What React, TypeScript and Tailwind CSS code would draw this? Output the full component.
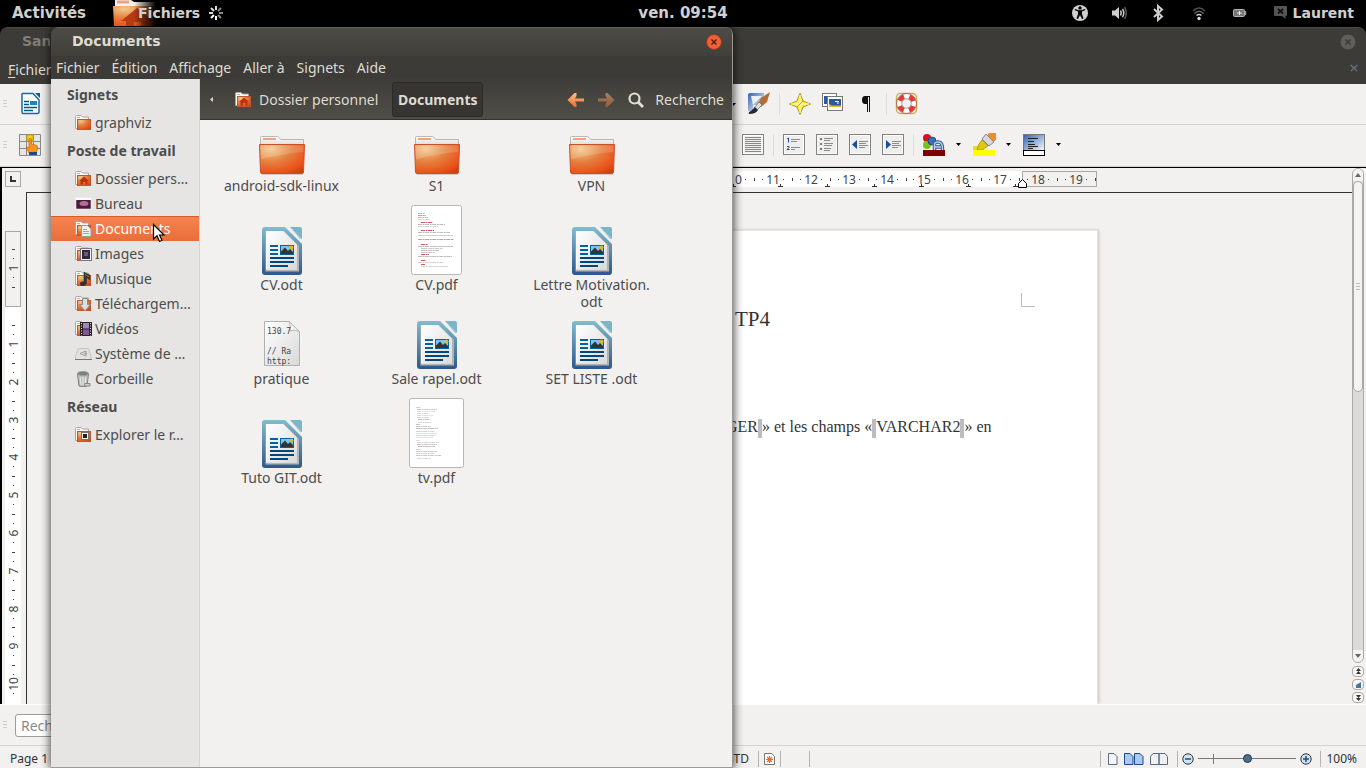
import React from "react";
import type { ReactNode } from "react";

type Kids = { children?: ReactNode };

/* ---------- shared gradients ---------- */

function Gradients() {
  return (
    <svg className="absolute h-0 w-0" aria-hidden="true">
      <defs>
        <radialGradient id="folder" cx="0.25" cy="0.15" r="1">
          <stop offset="0" stopColor="#f3c88c" />
          <stop offset="0.45" stopColor="#e5803f" />
          <stop offset="0.85" stopColor="#ea501a" />
          <stop offset="1" stopColor="#cf4313" />
        </radialGradient>
        <linearGradient id="tab" x1="0" y1="0" x2="0" y2="1">
          <stop offset="0" stopColor="#ffffff" />
          <stop offset="1" stopColor="#dcdcdc" />
        </linearGradient>
        <linearGradient id="odt" x1="0" y1="0" x2="0" y2="1">
          <stop offset="0" stopColor="#82bccd" />
          <stop offset="1" stopColor="#2d578c" />
        </linearGradient>
        <linearGradient id="paper" x1="0" y1="0" x2="1" y2="1">
          <stop offset="0" stopColor="#ffffff" />
          <stop offset="1" stopColor="#d9d9d9" />
        </linearGradient>
        <linearGradient id="blue" x1="0" y1="0" x2="1" y2="1">
          <stop offset="0" stopColor="#2f63ad" />
          <stop offset="1" stopColor="#ffffff" />
        </linearGradient>
        <linearGradient id="arrow" x1="0" y1="0" x2="0" y2="1">
          <stop offset="0" stopColor="#fbc08a" />
          <stop offset="1" stopColor="#ec6a2c" />
        </linearGradient>
      </defs>
    </svg>
  );
}

/* ---------- file icons ---------- */

function FolderIcon() {
  return (
    <svg width="48" height="48" viewBox="0 0 48 48" aria-hidden="true">
      <path d="M2.500 17V9.500Q2.500 8.500 3.500 8.500H19.500L23 11.500H45.500V17Z" fill="url(#tab)" stroke="#b9b7b4" />
      <rect x="5" y="10" width="13" height="2" fill="#f0a47c" />
      <path d="M1.500 16.500H46.500L45.500 44Q45.500 45.500 44 45.500H4Q2.500 45.500 2.500 44Z" fill="url(#folder)" stroke="#c8512a" />
      <path d="M2.500 17.500H45.500V24Q24 25.500 3 31.500Z" fill="#fff" opacity="0.16" />
      <path d="M4 46.500H45" stroke="#000" opacity="0.15" />
    </svg>
  );
}

function OdtIcon() {
  return (
    <svg width="40" height="48" viewBox="0 0 40 48" aria-hidden="true">
      <path d="M3 0H23L40 17V45Q40 48 37 48H3Q0 48 0 45V3Q0 0 3 0Z" fill="url(#odt)" />
      <path d="M28 0H38Q40 0 40 2V12Z" fill="#7ab6c8" />
      <path d="M28 0L40 12L38 12Z" fill="#5b9cb9" opacity="0.5" />
      <path d="M3.500 4H22L37 19V44.500H3.500Z" fill="#b3b3b3" />
      <path d="M4 4H21L35 18V42.500H4Z" fill="#fbfbfb" />
      <path d="M5 4H21L35 18V42.500H5Z" fill="url(#paper)" />
      <g fill="#00639c">
        <rect x="8" y="18" width="8" height="2" />
        <rect x="8" y="22" width="8" height="2" />
        <rect x="8" y="26" width="8" height="2" />
        <rect x="8" y="30" width="24" height="2" fill="#00487a" />
        <rect x="8" y="34" width="24" height="2" fill="#00487a" />
        <rect x="8" y="38" width="18" height="2" fill="#00487a" />
        <rect x="18" y="18" width="14" height="10" />
      </g>
      <rect x="19" y="19" width="12" height="8" fill="#7cc4ee" />
      <circle cx="29.500" cy="20.500" r="2" fill="#d9bb2c" />
      <path d="M19 27V24.500L23 20.500L26 24L28 22L31 25V27Z" fill="#333" />
    </svg>
  );
}

function TextFileIcon() {
  return (
    <svg width="40" height="48" viewBox="0 0 40 48" aria-hidden="true">
      <path d="M2.500 0.500H27L37.500 10.500V44.500H2.500Z" fill="url(#paper)" stroke="#b0b0ae" />
      <path d="M27 0.500L37.500 10.500Q32 8 28 10Q29 5 27 0.500Z" fill="#f4f4f4" stroke="#b8b8b6" />
      <g fill="#444" fontFamily="'DejaVu Sans Mono', monospace" fontSize="8">
        <text x="5" y="13">130.7</text>
        <text x="5" y="33">// Ra</text>
        <text x="5" y="43">http:</text>
      </g>
    </svg>
  );
}

const cvLines: [number, number, number, string][] = [
  [7, 8, 7, "#999"], [7, 10, 8, "#777"], [7, 12, 10, "#999"], [7, 14, 12, "#bbb"],
  [10, 17, 12, "#b33"], [7, 19, 27, "#999"], [7, 21, 20, "#bbb"],
  [10, 25, 13, "#b33"], [7, 27, 32, "#999"], [7, 30, 35, "#aaa"], [7, 34, 36, "#777"],
  [10, 39, 7, "#b33"], [7, 41, 35, "#999"], [10, 43, 22, "#aaa"], [10, 45, 18, "#999"], [10, 47, 14, "#aaa"],
  [10, 49, 8, "#b33"], [7, 51, 34, "#999"], [10, 55, 5, "#b33"], [7, 57, 26, "#bbb"], [10, 59, 4, "#b33"], [10, 61, 27, "#bbb"],
];

const tvLines: [number, number, number, string][] = [
  [7, 9, 5, "#bbb"], [8, 11, 20, "#aaa"], [8, 13, 18, "#ccc"], [8, 15, 12, "#bcd"], [8, 17, 16, "#ccc"],
  [8, 19, 12, "#bbb"], [9, 21, 12, "#999"], [9, 24, 13, "#bbb"], [7, 26, 5, "#aaa"], [7, 28, 15, "#aaa"], [7, 30, 22, "#999"],
  [7, 33, 19, "#bbb"], [7, 35, 21, "#bcd"], [7, 37, 20, "#bbb"], [7, 39, 17, "#ccc"], [7, 42, 4, "#ccc"],
  [8, 44, 22, "#bbb"], [8, 46, 20, "#aaa"], [9, 48, 17, "#999"], [7, 51, 5, "#bbb"], [7, 53, 21, "#aaa"],
  [7, 55, 19, "#bbb"], [7, 57, 25, "#aaa"], [8, 60, 14, "#bbb"],
];

function PageThumb({ width, lines }: { width: number; lines: [number, number, number, string][] }) {
  return (
    <svg width={width} height="70" viewBox={`0 0 ${width} 70`} aria-hidden="true">
      <rect x="0.5" y="0.5" width={width - 1} height="69" rx="2" fill="#fff" stroke="#b8b7b4" />
      {lines.map(([x, y, w, c], i) => (
        <path key={i} d={`M${x} ${y}.5H${x + w}`} stroke={c} strokeWidth={c === "#b33" ? 1 : 0.8} opacity="0.8" strokeDasharray="4 0.6 2 0.5" />
      ))}
    </svg>
  );
}

/* ---------- sidebar icons ---------- */

function SmallFolder({ children }: Kids) {
  return (
    <svg className="shrink-0" width="17" height="16" viewBox="0 0 17 16" aria-hidden="true">
      <path d="M0.500 13.500V1.500Q0.500 0.500 1.500 0.500H6L7.500 2H13.500V13.500Z" fill="#fbfbfa" stroke="#a8a5a2" />
      <path d="M2 2.500H5" stroke="#f0a47c" />
      <rect x="2.500" y="4.500" width="13" height="10" fill="url(#folder)" stroke="#c4552c" />
      {children}
    </svg>
  );
}

const smallIcons: Record<string, ReactNode> = {
  folder: <SmallFolder />,
  home: (
    <SmallFolder>
      <path d="M9 5.500L14 10H12.500V13.500H10.500V11H8V13.500H5.500V10H4Z" fill="#b93414" />
    </SmallFolder>
  ),
  desktop: (
    <svg className="shrink-0" width="17" height="16" viewBox="0 0 17 16" aria-hidden="true">
      <rect x="1" y="2" width="15" height="11" fill="#4d1a3b" stroke="#fff" strokeWidth="0.500" />
      <rect x="1" y="2" width="15" height="2" fill="#fff" />
      <ellipse cx="9" cy="7.500" rx="4.500" ry="2.500" fill="#c987a9" opacity="0.800" />
    </svg>
  ),
  documents: (
    <SmallFolder>
      <path d="M6.500 4.500H12.500L16 8V15.500H6.500Z" fill="#efefee" stroke="#9b9b98" />
      <path d="M8 8.500H12M8 10.500H14M8 12.500H14" stroke="#a9a9a6" />
    </SmallFolder>
  ),
  images: (
    <SmallFolder>
      <rect x="5.500" y="2.500" width="11" height="12" fill="#eee" stroke="#777" />
      <rect x="7" y="4" width="8" height="9" fill="#342a40" />
      <rect x="9" y="6" width="4" height="4" fill="#6b587c" />
    </SmallFolder>
  ),
  music: (
    <SmallFolder>
      <path d="M9.500 12V2L14.500 4.500V8L11 5.500V13" stroke="#333" strokeWidth="1.600" fill="none" />
      <ellipse cx="8" cy="12.800" rx="3" ry="2.300" fill="#333" />
    </SmallFolder>
  ),
  downloads: (
    <SmallFolder>
      <path d="M7.500 2.500H12.500V8.500H15.500L10 15L4.500 8.500H7.500Z" fill="#ddd" stroke="#888" />
    </SmallFolder>
  ),
  videos: (
    <SmallFolder>
      <rect x="5" y="1" width="12" height="14" fill="#29242b" />
      <rect x="8" y="2" width="6" height="5.500" fill="#a383b1" />
      <rect x="8" y="8.500" width="6" height="5.500" fill="#84559b" />
      <path d="M6.500 2V15M15.500 2V15" stroke="#ddd" strokeDasharray="1 1.500" />
    </SmallFolder>
  ),
  drive: (
    <svg className="shrink-0" width="17" height="16" viewBox="0 0 17 16" aria-hidden="true">
      <path d="M3.500 2.500H13.500L16 10.500V13.500H0.500V10.500Z" fill="#e2e2e1" stroke="#c4c4c2" />
      <path d="M0 13.500H17" stroke="#777" />
      <path d="M5 7.500L11 5V10ZM9 7.500H12" fill="none" stroke="#9a9a98" />
    </svg>
  ),
  trash: (
    <svg className="shrink-0" width="17" height="16" viewBox="0 0 17 16" aria-hidden="true">
      <path d="M2.500 3L4 15Q8 16.500 12 15L13.500 3Z" fill="#bdbfbe" stroke="#7e807f" />
      <ellipse cx="8" cy="2.500" rx="5.500" ry="2" fill="#7c7e7d" stroke="#9b9d9c" />
      <path d="M5 6L6 14M8 6V14M11 6L10 14" stroke="#e9e9e9" />
      <path d="M9.500 12.500H15V15H10Z" fill="#d0d0d0" stroke="#888" />
    </svg>
  ),
  network: (
    <SmallFolder>
      <rect x="6.500" y="5.500" width="7" height="7" fill="#f4f0ee" stroke="#777" />
      <rect x="8" y="7" width="4" height="4" fill="#222" />
    </SmallFolder>
  ),
};

/* ---------- top bar ---------- */

function TopBar() {
  return (
    <header className="flex h-[27px] shrink-0 items-center bg-black font-['DejaVu_Sans',sans-serif] text-[15px] font-bold text-[#d0d0d0]">
      <div className="flex flex-1 items-center">
        <button className="ml-3">Activités</button>
        <button className="relative ml-[27px] flex h-[27px] items-center pb-[2px] pl-[25px]">
          <svg className="absolute left-0 top-0" width="46" height="27" viewBox="0 0 46 27" aria-hidden="true">
            <defs>
              <linearGradient id="fade" x1="0" x2="1">
                <stop offset="0.45" stopColor="#000" stopOpacity="0" />
                <stop offset="0.93" stopColor="#000" />
              </linearGradient>
            </defs>
            <path d="M2 7V0H18L21 2H46V7Z" fill="#f2f2f2" />
            <path d="M4 2H16" stroke="#f0a47c" strokeWidth="3" />
            <path d="M0 6H46V26H1Z" fill="url(#folder)" />
            <path d="M8 21L24 8L40 21H36V26H28V22H21V26H13V21Z" fill="#b93a12" />
            <rect width="46" height="27" fill="url(#fade)" />
          </svg>
          <span className="relative text-sm">Fichiers</span>
          <svg className="ml-2" width="18" height="16" viewBox="-8 -8 18 16" strokeWidth="2" aria-hidden="true">
            <g stroke="#ddd">
              <path d="M0 -3V-7M-2 -2L-5 -5M-3 0H-7" />
              <path d="M-2 2L-5 5M0 3V7" stroke="#fff" />
              <path d="M2 -2L5 -5M3 0H7M2 2L5 5" stroke="#888" />
            </g>
          </svg>
        </button>
      </div>
      <time className="pb-px">ven. 09:54</time>
      <div className="flex flex-1 items-center justify-end pb-[2px] text-sm">
        <svg className="mr-[22px]" width="18" height="18" viewBox="0 0 18 18" aria-label="Accessibilité">
          <circle cx="9" cy="9" r="8" fill="#d0d0d0" />
          <circle cx="9" cy="4" r="1.700" fill="#000" />
          <path d="M3.500 6L7 7.500V10L5.500 14.500L7 15L9 11L11 15L12.500 14.500L11 10V7.500L14.500 6L14 5L10 6.300H8L4 5Z" fill="#000" />
        </svg>
        <svg className="mr-[24px]" width="17" height="16" viewBox="0 0 17 16" aria-label="Volume">
          <path d="M1 5.500H4L8 2V14L4 10.500H1Z" fill="#d0d0d0" />
          <path d="M9.500 5.500Q11 8 9.500 10.500M11.500 4Q14 8 11.500 12" stroke="#ccc" strokeWidth="1.500" fill="none" />
          <path d="M13.500 2Q17 8 13.500 14" stroke="#555" strokeWidth="1.500" fill="none" />
        </svg>
        <svg className="mr-[27px]" width="12" height="18" viewBox="0 0 12 18" aria-label="Bluetooth">
          <path d="M2 5L10 12.500L6 16V2L10 5.500L2 13" stroke="#ccc" strokeWidth="2" fill="none" />
        </svg>
        <svg className="mr-[26px]" width="16" height="16" viewBox="0 0 16 16" aria-label="Wi-Fi">
          <g fill="none" strokeWidth="1.600">
            <path d="M2 6Q8 0 14 6" stroke="#4d4d4d" />
            <path d="M3.500 8.500Q8 4 12.500 8.500" stroke="#666" />
            <path d="M5.500 10.500Q8 8.500 10.500 10.500" stroke="#ccc" />
          </g>
          <circle cx="8" cy="13.500" r="1.700" fill="#ddd" />
        </svg>
        <svg className="mr-[26px]" width="14" height="8" viewBox="0 0 14 8" aria-label="Batterie">
          <rect x="0.500" y="0.500" width="11" height="7" rx="1" fill="#777" stroke="#b5b5b5" />
          <path d="M4 4H9M6.500 2V6" stroke="#eee" />
          <path d="M12.500 2V6" stroke="#999" strokeWidth="1.500" />
        </svg>
        <button className="mr-3 flex items-center gap-[5px]">
          <svg width="15" height="15" viewBox="0 0 15 15" aria-hidden="true">
            <path d="M2 1H13Q14 1 14 2V10Q14 11 13 11H12.500V14L9 11H2Q1 11 1 10V2Q1 1 2 1Z" fill="#555" />
            <path d="M5 4L10 8.500M10 4L5 8.500" stroke="#111" strokeWidth="1.800" />
          </svg>
          Laurent
        </button>
      </div>
    </header>
  );
}

/* ---------- word processor ---------- */

function Cell({ label, children }: Kids & { label: string }) {
  return (
    <button aria-label={label} className="flex h-8 w-[33px] shrink-0 items-center justify-center">
      <svg width="24" height="24" viewBox="0 0 24 24" aria-hidden="true">
        {children}
      </svg>
    </button>
  );
}

function Caret({ label }: { label: string }) {
  return (
    <button aria-label={label} className="flex h-8 w-[17px] shrink-0 items-center justify-center">
      <svg width="5" height="3" viewBox="0 0 5 3" aria-hidden="true">
        <path d="M0 0H5L2.500 3Z" fill="#000" />
      </svg>
    </button>
  );
}

function Separator() {
  return (
    <span className="flex w-2 shrink-0 justify-center">
      <span className="h-[22px] w-px bg-[#dcdbd9]" />
    </span>
  );
}

function Handle() {
  return (
    <svg className="ml-[3px] mr-[6px] shrink-0" width="4" height="8" viewBox="0 0 4 8" aria-hidden="true">
      <path d="M0 0.500H4M0 3.500H4M0 6.500H4" stroke="#cfcecb" />
    </svg>
  );
}

function Frame({ children }: Kids) {
  return (
    <>
      <rect x="1.500" y="1.500" width="21" height="20" fill="#eeefed" stroke="#7f827d" />
      <rect x="2.500" y="2.500" width="19" height="18" fill="none" stroke="#fff" />
      {children}
    </>
  );
}

function Toolbars() {
  return (
    <>
      <div className="flex h-[41px] shrink-0 items-center overflow-hidden border-b border-[#d5d4d1]">
        <Handle />
        <Cell label="Nouveau">
          <path d="M4.500 1.500H15L21 8V20Q21 21.500 19.500 21.500H5Q4 21.500 4 20V2Z" fill="#fff" stroke="#1a6a96" strokeWidth="1.500" />
          <path d="M17 1H22V6Z" fill="#0f5f90" />
          <path d="M6 9.500H11M6 12.500H11M6 15.500H19M6 18.500H15" stroke="#00557f" strokeWidth="1.400" />
          <rect x="12" y="9" width="7" height="4" fill="#2a7fb5" />
        </Cell>
        <div className="w-[679px] shrink-0" />
        <Caret label="Options de collage" />
        <Cell label="Copier le formatage">
          <path d="M1 3Q1 1 3 1H17V13H6V19H1Z" fill="url(#blue)" />
          <path d="M4 4H15L6 13Z" fill="#fff" opacity="0.850" />
          <path d="M23 0L14 6L11 12L14 15L20 10Z" fill="#b56d36" />
          <path d="M12 10L15 13L10 18L7 16Z" fill="#ddd" stroke="#666" strokeWidth="0.700" />
          <path d="M8 15L11 18Q9 22 2 22Q1 20 4 19Q6 17 8 15Z" fill="#222b35" />
        </Cell>
        <Separator />
        <Cell label="Navigateur">
          <path d="M12 1L15 9L22.500 12L15 15L12 22.500L9 15L1.500 12L9 9Z" fill="#f8ed45" stroke="#b59d10" />
          <path d="M12 3V21M3 12H21" stroke="#fffbd0" />
          <path d="M12 12L15 9M12 12L9 15" stroke="#c5ad10" />
        </Cell>
        <Cell label="Galerie">
          <rect x="1.500" y="1.500" width="14" height="13" fill="#fff" stroke="#777" />
          <rect x="3" y="4" width="11" height="8" fill="#2c589c" />
          <rect x="6.500" y="4.500" width="15" height="14" fill="#fff" stroke="#777" />
          <rect x="8" y="7" width="12" height="8" fill="#2c589c" />
          <path d="M8 15V12L11 13.500H20V15Z" fill="#e7b52f" />
          <path d="M14 9.500H18M16 11H18" stroke="#fff" />
        </Cell>
        <Cell label="Caractères non imprimables">
          <path d="M9 4H16V20H15V5H14V20H13V12H11Q8 12 8 8Q8 4 11 4Z" fill="#111" />
        </Cell>
        <Separator />
        <Cell label="Aide">
          <rect x="1.500" y="1.500" width="20" height="20" rx="4" fill="none" stroke="#c8b15c" strokeWidth="1.500" />
          <circle cx="11.500" cy="11.500" r="7.300" fill="none" stroke="#fff" strokeWidth="5" />
          <circle cx="11.500" cy="11.500" r="7.300" fill="none" stroke="#e23b34" strokeWidth="5" strokeDasharray="6 5.467" strokeDashoffset="-2.700" />
          <circle cx="11.500" cy="11.500" r="4.700" fill="#f2f1f0" stroke="#888" strokeWidth="0.800" />
          <circle cx="11.500" cy="11.500" r="10" fill="none" stroke="#a33" strokeWidth="0.700" />
        </Cell>
      </div>
      <div className="flex h-[42px] shrink-0 items-center overflow-hidden border-b border-[#cfcecb] pb-[2px]">
        <Handle />
        <Cell label="Styles et formatage">
          <path d="M1.500 1.500H22.500V22.500H1.500ZM8.500 1.500V22.500M15.500 1.500V22.500M1.500 8.500H22.500M1.500 15.500H22.500" fill="#e6e7e4" stroke="#888a85" />
          <rect x="9" y="2" width="6" height="6" fill="#f5d80c" stroke="#c4a000" />
          <path d="M11 6Q12.500 4 13.500 6V11L19 12.500Q20 13 19.500 16L18 20H11L8 14L11 14.500Z" fill="#f8931e" stroke="#c9660b" strokeWidth="0.700" />
          <rect x="11" y="19" width="8" height="3" fill="#204a87" />
        </Cell>
        <div className="w-[690px] shrink-0" />
        <Cell label="Justifié">
          <Frame>
            <path d="M4 4.500H20M4 6.500H20M4 8.500H20M4 10.500H20M4 12.500H20M4 14.500H20M4 16.500H20M4 18.500H20" stroke="#888a85" />
          </Frame>
        </Cell>
        <Separator />
        <Cell label="Numérotation">
          <Frame>
            <path d="M9 6.500H18M9 8.500H15M9 14.500H18M9 16.500H13" stroke="#8b8d88" />
            <path d="M5 6L6.500 5V9.500M5 13.500H7V14.500L5 16.500H7.500" stroke="#204a87" fill="none" />
          </Frame>
        </Cell>
        <Cell label="Puces">
          <Frame>
            <path d="M9 5.500H18M9 7.500H15M9 10.500H18M9 12.500H17M9 15.500H16M9 17.500H15" stroke="#8b8d88" />
            <path d="M5 6H7M5 11H7M5 16H7" stroke="#777" strokeWidth="2" />
          </Frame>
        </Cell>
        <Cell label="Diminuer le retrait">
          <Frame>
            <path d="M9 7V16L4 11.500Z" fill="#204a9a" />
            <path d="M11 8.500H20M11 10.500H18M11 12.500H20M11 14.500H17" stroke="#8b8d88" />
          </Frame>
        </Cell>
        <Cell label="Augmenter le retrait">
          <Frame>
            <path d="M5 7V16L10 11.500Z" fill="#204a9a" />
            <path d="M11 8.500H20M11 10.500H18M11 12.500H20M11 14.500H17" stroke="#8b8d88" />
          </Frame>
        </Cell>
        <Separator />
        <Cell label="Couleur de police">
          <circle cx="5" cy="5" r="4" fill="#d8101e" />
          <circle cx="5" cy="12" r="4" fill="#73c616" />
          <circle cx="10" cy="8" r="4" fill="#3b70b5" stroke="#1e4a86" />
          <path d="M12.500 17V12Q12 9 16 9Q21 9 20.500 17M13 14H19" fill="none" stroke="#2d5a96" strokeWidth="3.500" />
          <path d="M12.500 17V12Q12 9 16 9Q21 9 20.500 17M13 14H19" fill="none" stroke="#b9d0ea" strokeWidth="1.500" />
          <rect x="1" y="17" width="22" height="6" fill="#800000" />
        </Cell>
        <Caret label="Choisir la couleur de police" />
        <Cell label="Surlignage">
          <rect x="1" y="13" width="11" height="5" fill="#e8dc20" />
          <path d="M17 0H24V7L20 10L14 4Z" fill="#f58a2a" />
          <path d="M14 1L22 9L17 13L10 6Z" fill="#d7d7d7" stroke="#888" />
          <path d="M10 7L16 13L10 17H5Q6 11 10 7Z" fill="#e2c90e" stroke="#a28b00" strokeWidth="0.700" />
          <rect x="1" y="17" width="22" height="6" fill="#ffff00" />
        </Cell>
        <Caret label="Choisir le surlignage" />
        <Cell label="Arrière-plan">
          <rect x="1.500" y="1.500" width="21" height="17" fill="url(#blue)" stroke="#777" />
          <path d="M6 5.500H16M6 8.500H12M6 11.500H13M6 13.500H16M6 15.500H11" stroke="#222" />
          <rect x="1.500" y="17.500" width="21" height="5" fill="#fff" stroke="#000" />
        </Cell>
        <Caret label="Choisir l'arrière-plan" />
      </div>
    </>
  );
}

const STEP = 37.8;

function HorizontalRuler() {
  const marks = [10, 11, 12, 13, 14, 15, 16, 17, 18, 19];
  return (
    <svg className="block" width="1096" height="24" viewBox="0 0 1096 24" aria-label="Règle horizontale">
      <rect x="353" y="3" width="643" height="16" fill="#fff" />
      <rect x="996.500" y="3.500" width="74" height="15" fill="#f2f1f0" stroke="#aaa9a6" />
      {marks.map((n) => {
        const x = Math.round(974 + (n - 17) * STEP);
        return (
          <g key={n} fill="#444">
            <text x={x} y="16" textAnchor="middle" fontSize="12">
              {n}
            </text>
            <rect x={x - 11} y="11" width="1" height="1" />
            <rect x={x + 10} y="11" width="1" height="1" />
            <rect x={x + 19} y="10" width="1" height="3" />
          </g>
        );
      })}
      {[707, 754, 801, 848, 895, 942, 989].map((x) => (
        <path key={x} d={`M${x - 2} 18.500H${x + 3}M${x + 0.500} 16V18.500`} stroke="#333" />
      ))}
      <path d="M992.500 19.500V15.500L996.500 11.500L1000.500 15.500V19.500Z" fill="#fff" stroke="#000" />
    </svg>
  );
}

function VerticalRuler() {
  const marks = [-1, 1, 2, 3, 4, 5, 6, 7, 8, 9, 10];
  return (
    <svg className="block" width="24" height="520" viewBox="0 0 24 520" aria-label="Règle verticale">
      <rect x="3" y="115" width="16" height="405" fill="#fff" />
      <rect x="3.500" y="39.500" width="15" height="75" fill="#f2f1f0" stroke="#aaa9a6" />
      {marks.map((n) => {
        const y = Math.round(152 + (n - 1) * STEP);
        return (
          <g key={n} fill="#444">
            <text x="0" y="0" fontSize="12" textAnchor="middle" transform={`translate(16 ${y}) rotate(-90)`}>
              {Math.abs(n)}
            </text>
            <rect x="11" y={y - 10} width="1" height="1" />
            <rect x="11" y={y + 9} width="1" height="1" />
            <rect x="10" y={y - 19} width="3" height="1" />
          </g>
        );
      })}
      <rect x="10" y="95" width="3" height="1" fill="#444" />
    </svg>
  );
}

function FieldMark() {
  return <span className="inline-block h-[19px] w-1 bg-[#bdbdbd] align-middle" />;
}

function ScrollColumn() {
  const small = "flex h-[11px] w-3 items-center justify-center rounded-[4px] border border-[#aaa9a6] bg-[#f7f6f5]";
  return (
    <div className="flex w-[14px] shrink-0 flex-col items-start border-t border-black pb-px">
      <div className="flex min-h-0 w-3 flex-1 flex-col rounded-full border border-[#aaa9a6] bg-[#dcdad8]">
        <button aria-label="Défiler vers le haut" className="flex h-3 items-center justify-center rounded-t-full bg-[#f4f3f2]">
          <svg width="6" height="4" viewBox="0 0 6 4" aria-hidden="true"><path d="M0 4H6L3 0Z" fill="#666" /></svg>
        </button>
        <div className="flex h-[211px] items-center justify-center rounded-full border border-[#aaa9a6] bg-[#f4f3f2]">
          <svg width="4" height="8" viewBox="0 0 4 8" aria-hidden="true"><path d="M0 0.500H4M0 3.500H4M0 6.500H4" stroke="#bbb" /></svg>
        </div>
        <button aria-label="Défiler vers le bas" className="mt-auto flex h-3 items-center justify-center rounded-b-full bg-[#f4f3f2]">
          <svg width="6" height="4" viewBox="0 0 6 4" aria-hidden="true"><path d="M0 0H6L3 4Z" fill="#666" /></svg>
        </button>
      </div>
      <div className="mt-[3px] flex flex-col gap-[2px]">
        <button aria-label="Page précédente" className={small}>
          <svg width="5" height="7" viewBox="0 0 5 7" aria-hidden="true"><path d="M2.500 0L5 3H0ZM2.500 3L5 6H0Z" fill="#333" /></svg>
        </button>
        <button aria-label="Navigation" className={small}>
          <svg width="5" height="6" viewBox="0 0 5 6" aria-hidden="true"><path d="M0 6V3L5 0V6Z" fill="#46749b" /></svg>
        </button>
        <button aria-label="Page suivante" className={small}>
          <svg width="5" height="7" viewBox="0 0 5 7" aria-hidden="true"><path d="M2.500 7L5 4H0ZM2.500 4L5 1H0Z" fill="#333" /></svg>
        </button>
      </div>
    </div>
  );
}

function StatusSeparator() {
  return <span className="h-4 w-px shrink-0 bg-[#b5b4b1]" />;
}

function RoundButton({ label, d }: { label: string; d: string }) {
  return (
    <button aria-label={label}>
      <svg width="12" height="12" viewBox="0 0 12 12" aria-hidden="true">
        <circle cx="6" cy="6" r="5.200" fill="#cfe3f2" stroke="#333" />
        <path d={d} stroke="#1f4d7a" strokeWidth="1.500" />
      </svg>
    </button>
  );
}

function StatusBar() {
  return (
    <footer className="flex h-[23px] shrink-0 items-center border-t border-[#d5d4d1] pt-[3px] text-xs text-[#333]">
      <span className="w-[717px] shrink-0 pl-[10px]">Page 1</span>
      <span className="w-[41px] shrink-0 pr-[9px] text-right">STD</span>
      <StatusSeparator />
      <svg className="mx-1 shrink-0" width="13" height="12" viewBox="0 0 13 12" aria-label="Document modifié">
        <path d="M1.500 0.500H8.500L11.500 3.500V11.500H1.500Z" fill="#fff" stroke="#777" />
        <path d="M6.500 3V10M3 6.500H10M4 4L9 9M9 4L4 9" stroke="#ec6a2c" strokeWidth="1.200" />
      </svg>
      <StatusSeparator />
      <span className="w-7 shrink-0" />
      <StatusSeparator />
      <div className="ml-auto flex items-center pr-[9px]">
        <StatusSeparator />
        <div className="ml-[7px] mr-[9px] flex gap-[6px]">
          <button aria-label="Une page">
            <svg width="10" height="12" viewBox="0 0 10 12" aria-hidden="true"><path d="M0.500 0.500H6L9 3.500V11.500H0.500Z" fill="#f3f5f8" stroke="#5a6b80" /></svg>
          </button>
          <button aria-label="Plusieurs pages">
            <svg width="20" height="12" viewBox="0 0 20 12" aria-hidden="true"><path d="M0.500 0.500H6L9 3.500V11.500H0.500ZM10.500 0.500H16L19 3.500V11.500H10.500Z" fill="#a9c9ee" stroke="#204a87" /></svg>
          </button>
          <button aria-label="Mode livre">
            <svg width="18" height="12" viewBox="0 0 18 12" aria-hidden="true"><path d="M0.500 3.500L3 0.500H9V11.500H0.500ZM9 0.500H15L17.500 3.500V11.500H9Z" fill="#eef0f2" stroke="#5a6b80" /></svg>
          </button>
        </div>
        <StatusSeparator />
        <div className="flex items-center pl-1 pr-2">
          <RoundButton label="Zoom arrière" d="M3 6H9" />
          <span className="relative mx-1 flex h-4 w-[98px] items-center">
            <span className="absolute left-[15px] top-[3px] h-[10px] w-px bg-[#777]" />
            <input
              type="range"
              aria-label="Zoom"
              defaultValue={50}
              className="relative h-px w-full appearance-none bg-[#777] [&::-webkit-slider-thumb]:h-[9px] [&::-webkit-slider-thumb]:w-[9px] [&::-webkit-slider-thumb]:appearance-none [&::-webkit-slider-thumb]:rounded-full [&::-webkit-slider-thumb]:border [&::-webkit-slider-thumb]:border-[#24384b] [&::-webkit-slider-thumb]:bg-[#47708f]"
            />
          </span>
          <RoundButton label="Zoom avant" d="M3 6H9M6 3V9" />
        </div>
        <StatusSeparator />
        <span className="ml-[5px]">100%</span>
      </div>
    </footer>
  );
}

function WriterWindow() {
  return (
    <section className="flex min-h-0 flex-1 flex-col bg-[#f2f1f0]">
      <div className="shrink-0 bg-black">
        <div className="rounded-t-lg border-t border-[#4b4a45] bg-[#3c3b37]">
          <div className="flex h-7 items-center justify-between pl-[22px] pr-[10px] font-['DejaVu_Sans',sans-serif] text-sm font-bold text-[#807d78]">
            <span className="w-7 overflow-hidden pb-[2px]">San</span>
            <button aria-label="Fermer">
              <svg width="16" height="16" viewBox="0 0 16 16" aria-hidden="true">
                <circle cx="8" cy="8" r="7.500" fill="#5f5e59" />
                <path d="M5.500 5.500L10.500 10.500M10.500 5.500L5.500 10.500" stroke="#3c3b37" strokeWidth="1.500" />
              </svg>
            </button>
          </div>
          <div className="flex h-7 items-center justify-between pl-2 pr-2 text-sm text-[#dfdbd2]">
            <button><span className="underline underline-offset-2">F</span>ichier</button>
            <button aria-label="Fermer le document" className="pb-1">
              <svg width="8" height="8" viewBox="0 0 8 8" aria-hidden="true"><path d="M0.500 1L4 4L7.500 1M1 7L4 4L7 7" stroke="#66727f" strokeWidth="1.400" fill="none" /></svg>
            </button>
          </div>
        </div>
      </div>
      <Toolbars />
      <div className="flex min-h-0 flex-1 border-b border-white">
        <div className="flex min-w-0 flex-1 flex-col border-l-2 border-t border-black">
          <div className="flex h-6 shrink-0">
            <div className="w-6 shrink-0 pl-[3px] pt-[3px]">
              <div className="flex h-4 w-4 items-center justify-center border border-[#aaa9a6]">
                <svg width="6" height="6" viewBox="0 0 6 6" aria-hidden="true"><path d="M1 0V5H6" stroke="#333" strokeWidth="2" fill="none" /></svg>
              </div>
            </div>
            <div className="min-w-0 flex-1 overflow-hidden"><HorizontalRuler /></div>
          </div>
          <div className="flex min-h-0 flex-1">
            <div className="w-6 shrink-0 overflow-hidden"><VerticalRuler /></div>
            <div className="flex min-w-0 flex-1 overflow-hidden border-l border-t border-[#333] pl-[277px] pt-[37px]">
              <article className="w-[794px] shrink-0 border-r border-t border-[#e4e3e1] bg-white pt-[62px] font-['Liberation_Serif',serif] text-base text-[#333] shadow-[1px_0_3px_rgba(0,0,0,0.2)]">
                <div className="ml-[717px] h-[14px] w-[14px] border-b border-l border-[#bdbdbd]" />
                <h1 className="ml-[431px] text-[21px] leading-6">TP4</h1>
                <p className="ml-[422px] mt-[86px] whitespace-nowrap leading-5">
                  GER<FieldMark />» et les champs «<FieldMark />VARCHAR2<FieldMark />» en
                </p>
              </article>
            </div>
          </div>
        </div>
        <ScrollColumn />
      </div>
      <div className="flex h-10 shrink-0 items-center">
        <Handle />
        <input
          aria-label="Rechercher dans le document"
          placeholder="Rechercher"
          className="ml-[2px] h-[23px] w-[180px] rounded-[3px] border border-[#9d9c99] bg-white px-[5px] text-sm placeholder:text-[#8a8a8a]"
        />
      </div>
      <StatusBar />
    </section>
  );
}

/* ---------- file manager ---------- */

const places: { title: string; items: [string, string][] }[] = [
  { title: "Signets", items: [["folder", "graphviz"]] },
  {
    title: "Poste de travail",
    items: [
      ["home", "Dossier pers…"],
      ["desktop", "Bureau"],
      ["documents", "Documents"],
      ["images", "Images"],
      ["music", "Musique"],
      ["downloads", "Téléchargem…"],
      ["videos", "Vidéos"],
      ["drive", "Système de …"],
      ["trash", "Corbeille"],
    ],
  },
  { title: "Réseau", items: [["network", "Explorer le r…"]] },
];

function Pointer() {
  return (
    <svg className="absolute left-[101px] top-[7px] z-10" width="14" height="21" viewBox="0 0 14 21" aria-hidden="true">
      <path d="M1.500 1.500V16L5 12.800L7.500 18.500L10 17.300L7.500 12H12Z" fill="#fff" stroke="#000" strokeWidth="1.200" />
    </svg>
  );
}

function Sidebar() {
  return (
    <nav className="w-[149px] shrink-0 border-r border-[#d5d3d1] bg-[#e6e5e4]">
      {places.map((group) => (
        <section key={group.title}>
          <h2 className="flex h-[31px] items-center pl-4 font-bold">{group.title}</h2>
          <ul>
            {group.items.map(([icon, name]) => (
              <li key={name} className="relative">
                <a
                  href="#"
                  className={
                    name === "Documents"
                      ? "flex h-[25px] items-center gap-[3px] whitespace-nowrap border-t border-[#dd5a25] bg-linear-to-b from-[#f58351] to-[#e96d38] pl-6 text-white"
                      : "flex h-[25px] items-center gap-[3px] whitespace-nowrap pl-6"
                  }
                >
                  {smallIcons[icon]}
                  {name}
                </a>
                {name === "Documents" && <Pointer />}
              </li>
            ))}
          </ul>
        </section>
      ))}
    </nav>
  );
}

const files: [string, ReactNode][] = [
  ["android-sdk-linux", <FolderIcon />],
  ["S1", <FolderIcon />],
  ["VPN", <FolderIcon />],
  ["CV.odt", <OdtIcon />],
  ["CV.pdf", <PageThumb width={51} lines={cvLines} />],
  ["Lettre Motivation.\nodt", <OdtIcon />],
  ["pratique", <TextFileIcon />],
  ["Sale rapel.odt", <OdtIcon />],
  ["SET LISTE .odt", <OdtIcon />],
  ["Tuto GIT.odt", <OdtIcon />],
  ["tv.pdf", <PageThumb width={55} lines={tvLines} />],
];

function FileGrid() {
  return (
    <div className="grid flex-1 auto-rows-max grid-cols-[repeat(auto-fill,155px)] content-start gap-y-[11px] bg-[#f2f1f0] pl-1 pt-2">
      {files.map(([name, icon]) => {
        const twoLines = name.includes("\n");
        return (
          <figure key={name} className="grid justify-items-center [&:nth-child(n+4):nth-child(-n+6)]:grid-rows-[70px_35px] [&:nth-child(-n+3)]:grid-rows-[48px_18px] [&:nth-child(n+7)]:grid-rows-[1fr_18px]">
            <span className="flex items-end">{icon}</span>
            <figcaption className={twoLines ? "whitespace-pre-line pt-px text-center leading-[17px]" : "whitespace-nowrap pt-px leading-[17px]"}>
              {name}
            </figcaption>
          </figure>
        );
      })}
    </div>
  );
}

function LocationBar() {
  return (
    <div className="flex h-[41px] shrink-0 items-center border-b border-[#33322e] bg-linear-to-b from-[#3e3d39] to-[#504e48] pr-2 pt-px text-[#dfdbd2]">
      <button aria-label="Dossiers précédents" className="ml-[10px] w-5">
        <svg width="4" height="5" viewBox="0 0 4 5" aria-hidden="true"><path d="M3 0V5L0 2.500Z" fill="#dfdbd2" /></svg>
      </button>
      <button className="ml-[5px] flex items-center gap-[7px] whitespace-nowrap">
        {smallIcons.home}
        Dossier personnel
      </button>
      <button className="ml-[14px] h-[35px] w-[91px] rounded-[3px] border border-[#2b2a27] bg-[#363531] font-bold">Documents</button>
      <button aria-label="Précédent" className="ml-auto">
        <svg width="18" height="16" viewBox="0 0 18 16" aria-hidden="true">
          <path d="M0.500 8L7.500 1H9.500V4L8 6.500H17V9.500H8L9.500 12V15H7.500Z" fill="url(#arrow)" />
        </svg>
      </button>
      <button aria-label="Suivant" className="ml-3 opacity-50">
        <svg width="18" height="16" viewBox="0 0 18 16" aria-hidden="true">
          <path d="M17.500 8L10.500 1H8.500V4L10 6.500H1V9.500H10L8.500 12V15H10.500Z" fill="url(#arrow)" />
        </svg>
      </button>
      <button className="ml-3 flex items-center gap-[10px]">
        <svg width="18" height="18" viewBox="0 0 18 18" aria-hidden="true">
          <circle cx="7.500" cy="7.500" r="5" fill="none" stroke="#e3dfd8" strokeWidth="2.200" />
          <path d="M11 11L16 16" stroke="#e3dfd8" strokeWidth="2.800" />
        </svg>
        Recherche
      </button>
    </div>
  );
}

function FilesWindow() {
  return (
    <section className="absolute bottom-0 left-[51px] top-0 flex w-[682px] flex-col overflow-hidden rounded-t-lg border-b border-r border-[#9c9a95] bg-[#3c3b37] text-sm text-[#4c4c4c] shadow-[0_0_10px_1px_rgba(0,0,0,0.7)]">
      <div className="flex h-[29px] shrink-0 items-center justify-between border-t border-[#65645c] bg-linear-to-b from-[#4c4b45] to-[#403f3a] pl-[21px] pr-[9px] font-['DejaVu_Sans',sans-serif] font-bold text-[#dfdbd2]">
        <h1 className="pb-[2px]">Documents</h1>
        <button aria-label="Fermer">
          <svg width="18" height="18" viewBox="0 0 18 18" aria-hidden="true">
            <circle cx="9" cy="9" r="7.500" fill="#ee6036" stroke="#8c3a20" />
            <path d="M6.500 6.500L11.500 11.500M11.500 6.500L6.500 11.500" stroke="#4b1e10" strokeWidth="1.400" />
          </svg>
        </button>
      </div>
      <div className="flex h-[23px] shrink-0 items-center gap-3 pl-[5px] text-[#dfdbd2]">
        {["Fichier", "Édition", "Affichage", "Aller à", "Signets", "Aide"].map((item) => (
          <button key={item}>{item}</button>
        ))}
      </div>
      <div className="flex min-h-0 flex-1">
        <Sidebar />
        <div className="flex min-w-0 flex-1 flex-col">
          <LocationBar />
          <FileGrid />
        </div>
      </div>
    </section>
  );
}

export default function App() {
  return (
    <div className="flex h-screen flex-col overflow-hidden bg-black font-['Noto_Sans',sans-serif]">
      <Gradients />
      <TopBar />
      <main className="relative flex min-h-0 flex-1 flex-col overflow-hidden">
        <WriterWindow />
        <FilesWindow />
      </main>
    </div>
  );
}
